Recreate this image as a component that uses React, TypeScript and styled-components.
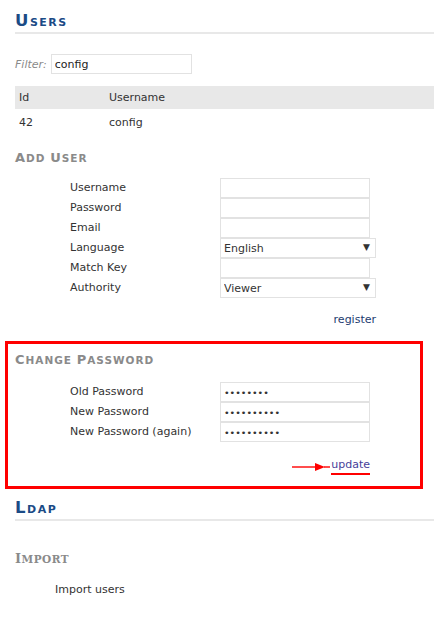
import React from "react";
import styled, { createGlobalStyle } from "styled-components";

const GlobalStyle = createGlobalStyle`
  html, body {
    margin: 0;
    padding: 0;
    background: #ffffff;
  }
  body {
    font-family: "DejaVu Sans", Verdana, sans-serif;
    font-size: 11px;
    color: #333333;
  }
`;

const Page = styled.div`
  width: 434px;
  padding: 0 0 0 15px;
  box-sizing: border-box;
`;

// headings use hand-made small caps: a bigger initial, the rest upper case
const SectionTitle = styled.h2<{ $pad?: number }>`
  margin: 0;
  padding: ${(p) => p.$pad ?? 14}px 0 0;
  font-size: 11px;
  font-weight: bold;
  text-transform: uppercase;
  letter-spacing: 1.5px;
  color: #1b4b86;
  border-bottom: 2px solid #e8e8e8;
  line-height: 18px;
`;

const TitleInitial = styled.span`
  font-size: 16.5px;
  line-height: 0;
`;

const SubTitle = styled.h3<{ $serif?: boolean }>`
  margin: 0;
  font-size: 10.5px;
  font-weight: bold;
  text-transform: uppercase;
  letter-spacing: ${(p) => (p.$serif ? 0.5 : 1)}px;
  color: #8a8a8a;
  line-height: 16px;
  font-family: ${(p) =>
    p.$serif ? '"DejaVu Serif", "Liberation Serif", serif' : "inherit"};
`;

const SubInitial = styled.span`
  font-size: 13px;
  line-height: 0;
`;

const FilterBar = styled.div`
  display: flex;
  align-items: center;
  gap: 4px;
  margin-top: 20px;
`;

const FilterLabel = styled.span`
  font-style: italic;
  color: #8a8a8a;
`;

const TextBox = styled.input<{ $w?: number }>`
  width: ${(p) => p.$w ?? 150}px;
  height: 20px;
  box-sizing: border-box;
  border: 1px solid #e2e2e2;
  padding: 0 3px;
  margin: 0;
  font-family: inherit;
  font-size: 11px;
  color: #222;
  outline: none;
  &[type="password"] {
    font-size: 9.5px;
    letter-spacing: 0;
    color: #333;
  }
`;

const Table = styled.table`
  margin-top: 12px;
  width: 100%;
  border-collapse: collapse;
`;

const HeadCell = styled.th<{ $w?: number }>`
  text-align: left;
  font-weight: normal;
  background: #e8e8e8;
  height: 23px;
  padding: 0 4px;
  width: ${(p) => (p.$w ? `${p.$w}px` : "auto")};
  color: #333;
`;

const Cell = styled.td`
  height: 26px;
  padding: 0 4px;
`;

const Block = styled.div<{ $top: number }>`
  margin-top: ${(p) => p.$top}px;
`;

const FormGrid = styled.div<{ $top: number }>`
  display: grid;
  grid-template-columns: 150px auto;
  padding-left: 55px;
  margin-top: ${(p) => p.$top}px;
`;

const FieldLabel = styled.div`
  height: 20px;
  line-height: 20px;
`;

const SelectWrap = styled.span`
  position: relative;
  display: inline-block;
  width: 156px;
  height: 20px;
`;

const Select = styled.select`
  appearance: none;
  width: 100%;
  height: 20px;
  box-sizing: border-box;
  border: 1px solid #e2e2e2;
  background: #fff;
  padding: 0 3px;
  margin: 0;
  font-family: inherit;
  font-size: 11px;
  color: #333;
  outline: none;
`;

const Caret = styled.span`
  position: absolute;
  right: 6px;
  top: 4px;
  font-size: 9px;
  color: #333;
  pointer-events: none;
`;

const ActionRow = styled.div<{ $right: number; $top: number }>`
  display: flex;
  justify-content: flex-end;
  align-items: center;
  width: ${(p) => p.$right}px;
  margin-top: ${(p) => p.$top}px;
`;

const Link = styled.a<{ $marked?: boolean }>`
  color: ${(p) => (p.$marked ? "#46409a" : "#1d3c70")};
  text-decoration: none;
  cursor: pointer;
  padding-bottom: 2px;
  border-bottom: 2px solid ${(p) => (p.$marked ? "#ff0000" : "transparent")};
`;

const Highlight = styled.section`
  margin: 11px 11px 0 -10px;
  border: 3px solid #ff0000;
  padding: 8px 7px 11px;
`;

const Arrow = styled.svg`
  display: block;
  margin-right: 1px;
`;

const PlainText = styled.div`
  padding-left: 40px;
  margin-top: 16px;
`;

const App: React.FC = () => {
  return (
    <>
      <GlobalStyle />
      <Page>
        <SectionTitle>
          <TitleInitial>U</TitleInitial>sers
        </SectionTitle>

        <FilterBar>
          <FilterLabel>Filter:</FilterLabel>
          <TextBox $w={141} defaultValue="config" />
        </FilterBar>

        <Table>
          <thead>
            <tr>
              <HeadCell $w={82}>Id</HeadCell>
              <HeadCell>Username</HeadCell>
            </tr>
          </thead>
          <tbody>
            <tr>
              <Cell>42</Cell>
              <Cell>config</Cell>
            </tr>
          </tbody>
        </Table>

        <Block $top={15}>
          <SubTitle>
            <SubInitial>A</SubInitial>dd <SubInitial>U</SubInitial>ser
          </SubTitle>
          <FormGrid $top={12}>
            <FieldLabel>Username</FieldLabel>
            <TextBox />
            <FieldLabel>Password</FieldLabel>
            <TextBox type="text" />
            <FieldLabel>Email</FieldLabel>
            <TextBox />
            <FieldLabel>Language</FieldLabel>
            <SelectWrap>
              <Select defaultValue="en">
                <option value="en">English</option>
              </Select>
              <Caret>▼</Caret>
            </SelectWrap>
            <FieldLabel>Match Key</FieldLabel>
            <TextBox />
            <FieldLabel>Authority</FieldLabel>
            <SelectWrap>
              <Select defaultValue="viewer">
                <option value="viewer">Viewer</option>
              </Select>
              <Caret>▼</Caret>
            </SelectWrap>
          </FormGrid>
          <ActionRow $right={361} $top={15}>
            <Link>register</Link>
          </ActionRow>
        </Block>

        <Highlight>
          <SubTitle>
            <SubInitial>C</SubInitial>hange <SubInitial>P</SubInitial>assword
          </SubTitle>
          <FormGrid $top={14}>
            <FieldLabel>Old Password</FieldLabel>
            <TextBox type="password" defaultValue="12345678" />
            <FieldLabel>New Password</FieldLabel>
            <TextBox type="password" defaultValue="1234567890" />
            <FieldLabel>New Password (again)</FieldLabel>
            <TextBox type="password" defaultValue="1234567890" />
          </FormGrid>
          <ActionRow $right={355} $top={16}>
            <Arrow width="38" height="10" viewBox="0 0 38 10">
              <line x1="0" y1="5" x2="25" y2="5" stroke="#ff0000" strokeWidth="1.4" />
              <polygon points="23,1 33,5 23,9" fill="#ff0000" />
              <line x1="32" y1="5" x2="38" y2="5" stroke="#ff0000" strokeWidth="1.4" />
            </Arrow>
            <Link $marked>update</Link>
          </ActionRow>
        </Highlight>

        <SectionTitle $pad={12}>
          <TitleInitial>L</TitleInitial>dap
        </SectionTitle>

        <Block $top={30}>
          <SubTitle $serif>
            <SubInitial>I</SubInitial>mport
          </SubTitle>
          <PlainText>Import users</PlainText>
        </Block>
      </Page>
    </>
  );
};

export default App;
